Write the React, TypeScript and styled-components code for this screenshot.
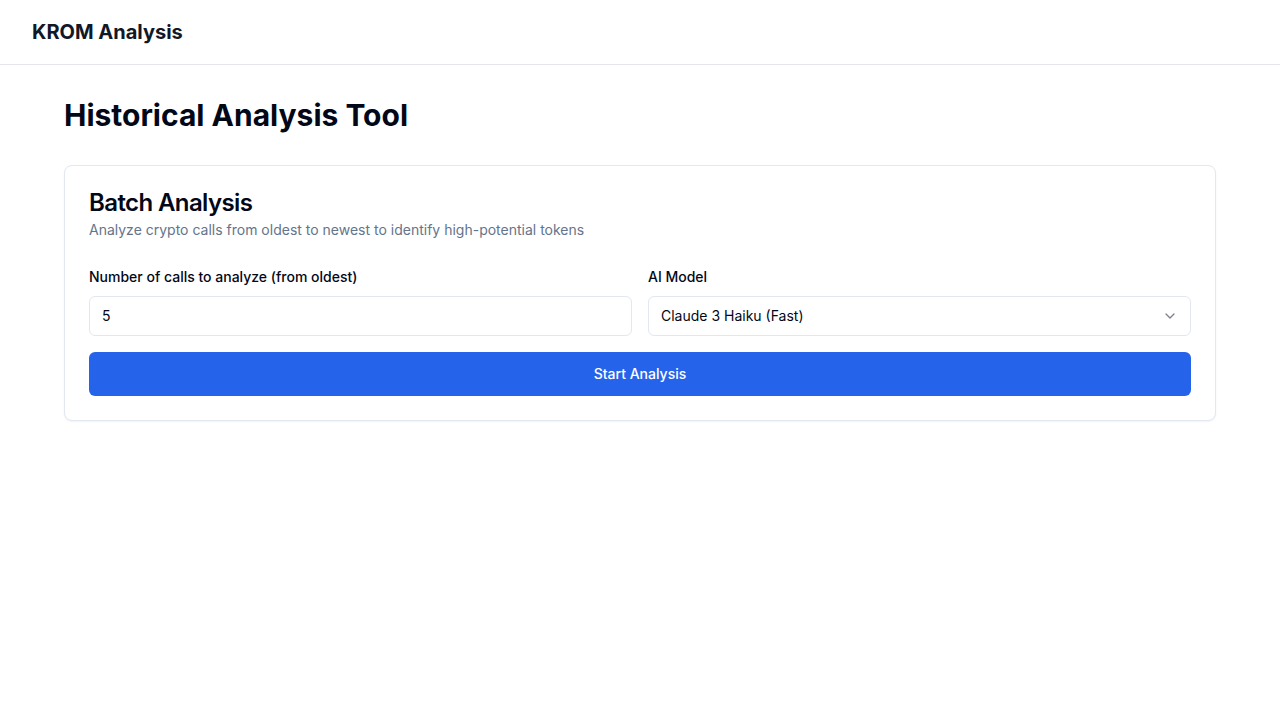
import React, { FC, useState } from "react";
import styled, { createGlobalStyle } from "styled-components";
import { ChevronDown } from "lucide-react";

const GlobalStyle = createGlobalStyle`
  * { box-sizing: border-box; }
  body {
    margin: 0;
    background: #ffffff;
    font-family: Inter, "Noto Sans", "Liberation Sans", sans-serif;
    color: #020817;
  }
`;

const Header = styled.header`
  height: 65px;
  border-bottom: 1px solid #e5e7eb;
  display: flex;
  align-items: center;
  padding: 0 32px;
`;

const Brand = styled.h1`
  margin: 0;
  font-size: 20px;
  line-height: 28px;
  font-weight: 700;
  color: #111827;
`;

const Main = styled.main`
  padding: 32px 64px;
`;

const PageTitle = styled.h2`
  margin: 0 0 32px;
  font-size: 30px;
  line-height: 36px;
  font-weight: 700;
  color: #020817;
`;

const Card = styled.section`
  border: 1px solid #e2e8f0;
  border-radius: 8px;
  background: #ffffff;
  box-shadow: 0 1px 2px rgba(0, 0, 0, 0.05);
  padding: 24px;
`;

const CardTitle = styled.h3`
  margin: 0;
  font-size: 24px;
  line-height: 26px;
  font-weight: 600;
  letter-spacing: -0.6px;
  color: #020817;
`;

const CardDescription = styled.p`
  margin: 4px 0 0;
  font-size: 14px;
  line-height: 20px;
  color: #64748b;
`;

const Form = styled.div`
  margin-top: 27px;
  display: flex;
  flex-direction: column;
  gap: 16px;
`;

const Fields = styled.div`
  display: grid;
  grid-template-columns: 1fr 1fr;
  gap: 16px;
`;

const Field = styled.label`
  display: flex;
  flex-direction: column;
  gap: 9px;
`;

const LabelText = styled.span`
  font-size: 14px;
  line-height: 20px;
  font-weight: 500;
  color: #020817;
`;

const Control = styled.div`
  position: relative;
  height: 40px;
  border: 1px solid #e2e8f0;
  border-radius: 6px;
  background: #ffffff;
  display: flex;
  align-items: center;
  padding: 0 12px 1px;
  font-size: 14px;
  color: #020817;
`;

const TextInput = styled.input`
  border: none;
  outline: none;
  width: 100%;
  padding: 0;
  font: inherit;
  color: inherit;
  background: transparent;
`;

const SelectValue = styled.span`
  flex: 1;
`;

const Chevron = styled(ChevronDown)`
  width: 16px;
  height: 16px;
  opacity: 0.5;
  color: #020817;
`;

const PrimaryButton = styled.button`
  height: 44px;
  width: 100%;
  border: none;
  border-radius: 6px;
  background: #2563eb;
  color: #ffffff;
  font-family: inherit;
  font-size: 14px;
  font-weight: 500;
  padding: 0 16px 2px;
  cursor: pointer;
`;

const App: FC = () => {
  const [count, setCount] = useState("5");

  return (
    <>
      <GlobalStyle />
      <Header>
        <Brand>KROM Analysis</Brand>
      </Header>
      <Main>
        <PageTitle>Historical Analysis Tool</PageTitle>
        <Card>
          <CardTitle>Batch Analysis</CardTitle>
          <CardDescription>
            Analyze crypto calls from oldest to newest to identify high-potential tokens
          </CardDescription>
          <Form>
            <Fields>
              <Field>
                <LabelText>Number of calls to analyze (from oldest)</LabelText>
                <Control>
                  <TextInput
                    type="text"
                    value={count}
                    onChange={(e) => setCount(e.target.value)}
                  />
                </Control>
              </Field>
              <Field>
                <LabelText>AI Model</LabelText>
                <Control>
                  <SelectValue>Claude 3 Haiku (Fast)</SelectValue>
                  <Chevron />
                </Control>
              </Field>
            </Fields>
            <PrimaryButton type="button">Start Analysis</PrimaryButton>
          </Form>
        </Card>
      </Main>
    </>
  );
};

export default App;
